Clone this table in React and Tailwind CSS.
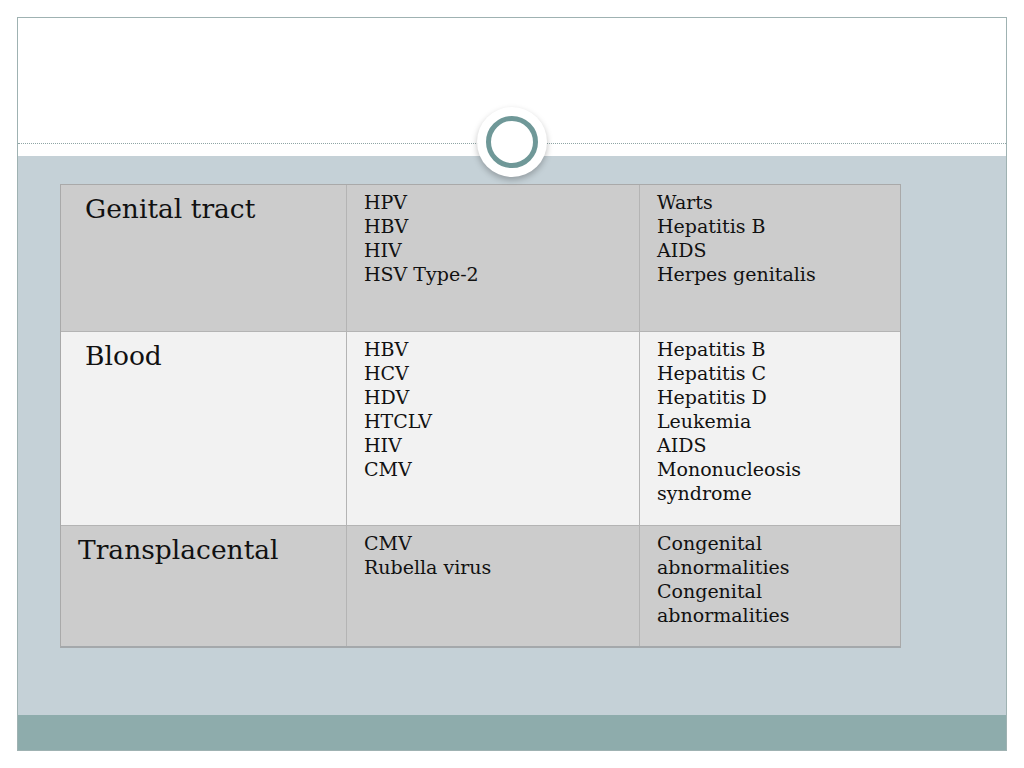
import React from "react";

const rows = [
  {
    site: "Genital tract",
    indent: "pl-[24px]",
    bg: "bg-[#cccccc]",
    h: "h-[147px]",
    viruses: ["HPV", "HBV", "HIV", "HSV Type-2"],
    diseases: ["Warts", "Hepatitis B", "AIDS", "Herpes genitalis"],
  },
  {
    site: "Blood",
    indent: "pl-[24px]",
    bg: "bg-[#f2f2f2]",
    h: "h-[194px]",
    viruses: ["HBV", "HCV", "HDV", "HTCLV", "HIV", "CMV"],
    diseases: ["Hepatitis B", "Hepatitis C", "Hepatitis D", "Leukemia", "AIDS", "Mononucleosis", "syndrome"],
  },
  {
    site: "Transplacental",
    indent: "pl-[17px]",
    bg: "bg-[#cccccc]",
    h: "h-[120px]",
    viruses: ["CMV", "Rubella virus"],
    diseases: ["Congenital", "abnormalities", "Congenital", "abnormalities"],
  },
];

function Row({ row, last }) {
  return (
    <div className={`grid grid-cols-[286px_293px_1fr] ${row.bg} ${row.h} ${last ? "" : "border-b border-[#b4b4b4]"}`}>
      <div className={`${row.indent} pt-[6px] border-r border-[#b4b4b4] text-[26.5px] leading-[36px] text-[#111]`}>
        {row.site}
      </div>
      <div className="pl-[17px] pt-[5px] border-r border-[#b4b4b4] text-[19px] leading-[24px] text-[#111]">
        {row.viruses.map((v, i) => (
          <div key={i}>{v}</div>
        ))}
      </div>
      <div className="pl-[17px] pt-[5px] text-[19px] leading-[24px] text-[#111]">
        {row.diseases.map((d, i) => (
          <div key={i}>{d}</div>
        ))}
      </div>
    </div>
  );
}

export default function App() {
  return (
    <div className="w-[1024px] h-[768px] bg-white pt-[17px] pl-[17px]" style={{ fontFamily: '"DejaVu Serif", "Liberation Serif", serif' }}>
      <div className="relative w-[990px] h-[734px] border border-[#9fb2b2] flex flex-col">
        {/* header */}
        <div className="h-[138px] bg-white flex flex-col justify-end pb-[12px]">
          <div className="border-t border-dotted border-[#8fa5a5]" />
        </div>

        {/* body */}
        <div className="flex-1 bg-[#c5d1d7] pt-[28px] pl-[42px]">
          <div className="w-[841px] border border-[#a9a9a9] border-b-2 border-b-[#a4a8ab]">
            {rows.map((r, i) => (
              <Row key={i} row={r} last={i === rows.length - 1} />
            ))}
          </div>
        </div>

        {/* footer */}
        <div className="h-[35px] bg-[#8eacac]" />

        {/* ring ornament */}
        <div className="absolute left-[459px] top-[89px] w-[70px] h-[70px] rounded-full bg-white shadow-[0_3px_6px_rgba(0,0,0,0.25)] flex items-center justify-center">
          <div className="w-[52px] h-[52px] rounded-full border-[5px] border-[#6f9898] bg-white" />
        </div>
      </div>
    </div>
  );
}
